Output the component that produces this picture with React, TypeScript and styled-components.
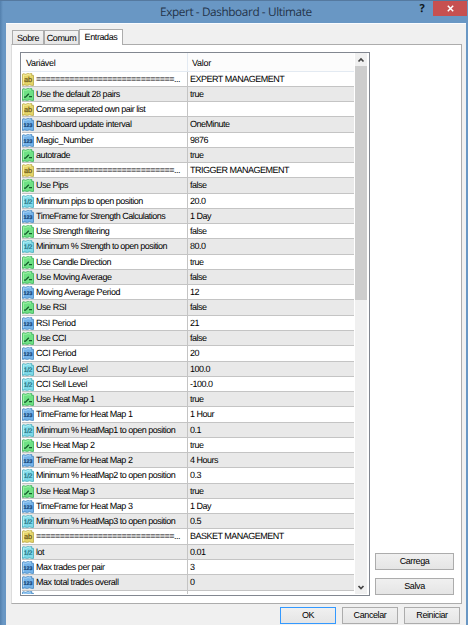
import styled, { createGlobalStyle } from 'styled-components'

type Kind = 'text' | 'bool' | 'int' | 'double'

const GlobalStyle = createGlobalStyle`
  body {
    margin: 0;
    overflow: hidden;
    font-family: 'Liberation Sans', Arial, sans-serif;
    font-size: 9px;
    text-rendering: geometricPrecision;
    color: #000;
  }
  * {
    box-sizing: border-box;
  }
`

const Window = styled.div`
  width: 468px;
  height: 625px;
  display: flex;
  flex-direction: column;
  padding: 0 2px 0 6px;
  background: linear-gradient(90deg, #5380ad 0, #6997c4 3px, #6997c4 100%);
  border-top: 1px solid #55799f;
`

const TitleBar = styled.header`
  flex: none;
  height: 22px;
  display: flex;
  align-items: flex-start;
  margin-right: -1px;
`

const Title = styled.h1`
  flex: 1;
  margin: 0 0 0 154px;
  font: 400 11.8px/22px 'Open Sans', 'Noto Sans', sans-serif;
  letter-spacing: -0.4px;
  color: #24344a;
  white-space: nowrap;
`

const Help = styled.span`
  width: 22px;
  font: 700 11px/15px 'Open Sans', sans-serif;
  color: #101820;
  text-align: center;
`

const Close = styled.button`
  width: 34px;
  height: 15px;
  padding: 0;
  border: 0;
  background: #c75050;
  display: grid;
  place-items: center;
`

const Client = styled.main`
  flex: 1;
  min-height: 0;
  display: flex;
  flex-direction: column;
  padding: 5px 4px 1px 5px;
  background: #f0f0f0;
  border-top: 1px solid #fafcff;
`

const Tabs = styled.nav`
  height: 15px;
  display: flex;
  align-items: flex-end;
  padding-left: 1px;
`

const Tab = styled.span<{ $width: number; $active?: boolean }>`
  width: ${props => props.$width}px;
  height: ${props => (props.$active ? 16 : 14)}px;
  margin-bottom: ${props => (props.$active ? -1 : 0)}px;
  padding-top: 2px;
  z-index: ${props => (props.$active ? 1 : 0)};
  line-height: 11px;
  text-align: center;
  letter-spacing: -0.4px;
  white-space: nowrap;
  background: ${props => (props.$active ? '#fff' : 'linear-gradient(#f2f2f2, #e6e6e6)')};
  border: 1px solid #acacac;
  border-bottom: 0;
  & + & {
    border-left-width: ${props => (props.$active ? 1 : 0)}px;
  }
`

const Page = styled.section`
  height: 560px;
  display: flex;
  padding: 7px 7px 7px 8px;
  background: #fff;
  border: 1px solid #acacac;
  border-left-color: #dcdcdc;
`

const List = styled.div`
  width: 350px;
  height: 544px;
  display: flex;
  border: 1px solid #828790;
  padding: 0 1px 1px;
  overflow: hidden;
`

const Table = styled.div`
  width: 332px;
  overflow: hidden;
`

const HeaderRow = styled.div`
  height: 18.5px;
  display: grid;
  grid-template-columns: 165px 1fr;
  line-height: 20px;
  letter-spacing: -0.3px;
  background: #fcfcfc;
  border-bottom: 1px solid #e3eaf2;
  span {
    padding-left: 4px;
  }
  span + span {
    border-left: 1px solid #e3eaf2;
  }
`

const Row = styled.div<{ $shaded: boolean }>`
  height: 15.27px;
  display: grid;
  grid-template-columns: 165px 1fr;
  line-height: 15px;
  background: ${props => (props.$shaded ? '#e9e9e9' : '#fff')};
  border-bottom: 1px solid #c4c4c4;
`

const Name = styled.span<{ $spacing?: number }>`
  display: flex;
  align-items: center;
  gap: 2px;
  white-space: nowrap;
  letter-spacing: ${props => props.$spacing ?? -0.47}px;
  svg {
    flex: none;
  }
`

const Value = styled.span`
  padding-left: 2px;
  border-left: 1px solid #c4c4c4;
  letter-spacing: -0.5px;
  white-space: nowrap;
`

const ScrollBar = styled.div`
  width: 12px;
  margin-left: 1px;
  display: flex;
  flex-direction: column;
  align-items: center;
  justify-content: space-between;
  background: #f0f0f0;
`

const ScrollTop = styled.div`
  width: 12px;
`

const Arrow = styled.svg`
  display: block;
  width: 12px;
  height: 13px;
  fill: none;
  stroke: #444;
  stroke-width: 1.7;
`

const Thumb = styled.div`
  height: 234px;
  background: #cdcdcd;
`

const SideButtons = styled.div`
  flex: 1;
  display: flex;
  flex-direction: column;
  justify-content: flex-end;
  align-items: flex-end;
  gap: 8px;
  padding-bottom: 1px;
`

const Button = styled.button<{ $width: number; $primary?: boolean }>`
  width: ${props => props.$width}px;
  height: 17px;
  padding: 0;
  border: 1px solid ${props => (props.$primary ? '#3399ff' : '#acacac')};
  background: linear-gradient(#f0f0f0, #e5e5e5);
  font: inherit;
  line-height: 15px;
  letter-spacing: -0.4px;
  color: #000;
`

const Footer = styled.footer`
  display: flex;
  justify-content: flex-end;
  gap: 6px;
  padding: 3px 2px 0 0;
`

const palette: Record<Kind, { fill: string; edge: string; ink: string; light: string }> = {
  text: { fill: '#e5d568', edge: '#b7a444', ink: '#69571a', light: '#f8efa2' },
  bool: { fill: '#6ee184', edge: '#38ad58', ink: '#145b2b', light: '#a3f5aa' },
  int: { fill: '#74b3e9', edge: '#4284bd', ink: '#123f70', light: '#a8d4f8' },
  double: { fill: '#7ed9e8', edge: '#42a9b9', ink: '#216b79', light: '#b6f2f7' },
}

const glyphs = { text: 'ab', int: '123', double: '1/2', bool: '' }

function TypeIcon({ kind, blank }: { kind: Kind; blank?: boolean }) {
  const c = palette[kind]
  return (
    <svg width="12" height="13" viewBox="0 0 12 13">
      <path
        d="M.5 1.7Q.5.6 1.6.8L3.6 1.3 6 .6 8 1.1 8.6.6H9.8V2.4H11.5V12.4H9.8L7.6 11.8 5.2 12.4 2.8 11.9.5 12.4Z"
        fill={c.fill}
        stroke={c.edge}
        strokeWidth=".8"
      />
      <path d="M1.4 11V1.9L3.8 2.3 6 1.6 9 2.1" fill="none" stroke={c.light} />
      {kind === 'bool' && (
        <path d="M2 9.2H3.5L6.8 5.8M7 8.7H10" fill="none" stroke={c.ink} strokeWidth="1.3" />
      )}
      {kind !== 'bool' && !blank && (
        <text
          x="6"
          y={kind === 'double' ? 8.6 : 9.4}
          textAnchor="middle"
          fontSize={kind === 'int' ? 5.4 : kind === 'text' ? 7.4 : 6.6}
          fontWeight={kind === 'int' ? 700 : 400}
          fill={c.ink}
          stroke={c.ink}
          strokeWidth=".2"
          letterSpacing={kind === 'double' ? -0.3 : 0}
        >
          {glyphs[kind]}
        </text>
      )}
    </svg>
  )
}

const divider = '='.repeat(29) + '...'

// kind, variable, value, letter spacing of the variable
const rows: [Kind, string, string, number?][] = [
  ['text', divider, 'EXPERT MANAGEMENT', -0.5],
  ['bool', 'Use the default 28 pairs', 'true'],
  ['text', 'Comma seperated own pair list', '', -0.51],
  ['int', 'Dashboard update interval', 'OneMinute', -0.4],
  ['int', 'Magic_Number', '9876', -0.3],
  ['bool', 'autotrade', 'true', -0.43],
  ['text', divider, 'TRIGGER MANAGEMENT', -0.5],
  ['bool', 'Use Pips', 'false', -0.5],
  ['double', 'Minimum pips to open position', '20.0', -0.51],
  ['int', 'TimeFrame for Strength Calculations', '1 Day', -0.5],
  ['bool', 'Use Strength filtering', 'false', -0.49],
  ['double', 'Minimum % Strength to open position', '80.0', -0.53],
  ['bool', 'Use Candle Direction', 'true', -0.5],
  ['bool', 'Use Moving Average', 'false', -0.4],
  ['int', 'Moving Average Period', '12', -0.42],
  ['bool', 'Use RSI', 'false'],
  ['int', 'RSI Period', '21', -0.4],
  ['bool', 'Use CCI', 'false', -0.6],
  ['int', 'CCI Period', '20', -0.4],
  ['double', 'CCI Buy Level', '100.0'],
  ['double', 'CCI Sell Level', '-100.0', -0.43],
  ['bool', 'Use Heat Map 1', 'true'],
  ['int', 'TimeFrame for Heat Map 1', '1 Hour'],
  ['double', 'Minimum % HeatMap1 to open position', '0.1', -0.51],
  ['bool', 'Use Heat Map 2', 'true'],
  ['int', 'TimeFrame for Heat Map 2', '4 Hours'],
  ['double', 'Minimum % HeatMap2 to open position', '0.3', -0.51],
  ['bool', 'Use Heat Map 3', 'true'],
  ['int', 'TimeFrame for Heat Map 3', '1 Day'],
  ['double', 'Minimum % HeatMap3 to open position', '0.5', -0.51],
  ['text', divider, 'BASKET MANAGEMENT', -0.5],
  ['double', 'lot', '0.01'],
  ['int', 'Max trades per pair', '3'],
  ['int', 'Max total trades overall', '0', -0.44],
  ['int', '', ''],
]

export default function App() {
  return (
    <Window>
      <GlobalStyle />
      <TitleBar>
        <Title>Expert - Dashboard - Ultimate</Title>
        <Help>?</Help>
        <Close aria-label="Close">
          <svg width="7" height="7" viewBox="0 0 7 7">
            <path d="M.8.8 6.2 6.2M6.2.8.8 6.2" stroke="#fff" strokeWidth="1.5" />
          </svg>
        </Close>
      </TitleBar>
      <Client>
        <Tabs>
          <Tab $width={32}>Sobre</Tab>
          <Tab $width={35}>Comum</Tab>
          <Tab $width={44} $active>
            Entradas
          </Tab>
        </Tabs>
        <Page>
          <List>
            <Table>
              <HeaderRow>
                <span>Variável</span>
                <span>Valor</span>
              </HeaderRow>
              {rows.map(([kind, name, value, spacing], i) => (
                <Row key={i} $shaded={i % 2 === 1}>
                  <Name $spacing={spacing}>
                    <TypeIcon kind={kind} blank={!name} />
                    {name}
                  </Name>
                  <Value>{value}</Value>
                </Row>
              ))}
            </Table>
            <ScrollBar>
              <ScrollTop>
                <Arrow viewBox="0 0 12 13">
                  <path d="M3.5 8.5 6 6 8.5 8.5" />
                </Arrow>
                <Thumb />
              </ScrollTop>
              <Arrow viewBox="0 0 12 13">
                <path d="M3.5 5 6 7.5 8.5 5" />
              </Arrow>
            </ScrollBar>
          </List>
          <SideButtons>
            <Button $width={79}>Carrega</Button>
            <Button $width={79}>Salva</Button>
          </SideButtons>
        </Page>
        <Footer>
          <Button $width={56} $primary>
            OK
          </Button>
          <Button $width={56}>Cancelar</Button>
          <Button $width={56}>Reiniciar</Button>
        </Footer>
      </Client>
    </Window>
  )
}
